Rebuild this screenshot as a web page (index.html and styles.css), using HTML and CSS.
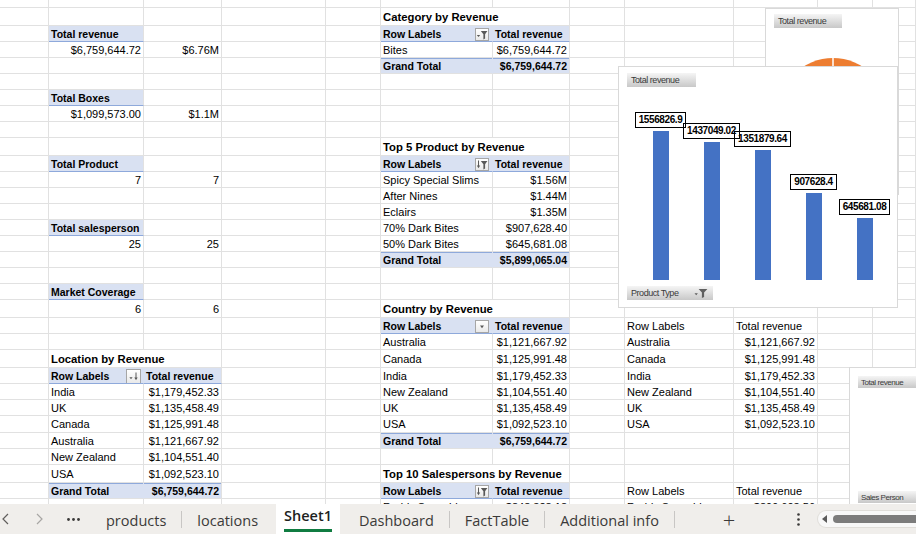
FILE: index.html
```html
<!DOCTYPE html>
<html lang="en">
<head>
<meta charset="utf-8">
<title>Sheet1</title>
<link rel="stylesheet" href="styles.css">
</head>
<body>
<main class="wrap">
  <div class="sheet">
    <!-- r0 -->
    <div class="c"></div><div class="c"></div><div class="c"></div><div class="c"></div><div class="c"></div><div class="c"></div><div class="c"></div><div class="c"></div><div class="c"></div><div class="c"></div><div class="c"></div><div class="c"></div>
    <!-- r1 -->
    <div class="c"></div><div class="c"></div><div class="c"></div><div class="c"></div><div class="c"></div>
    <div class="c b w2">Category by Revenue</div>
    <div class="c"></div><div class="c"></div><div class="c"></div><div class="c"></div><div class="c"></div>
    <!-- r2 -->
    <div class="c"></div><div class="c h">Total revenue</div><div class="c"></div><div class="c"></div><div class="c"></div>
    <div class="c h hl">Row Labels<span class="fb"><svg viewBox="0 0 12 11"><path d="M0.8 6h3.4L2.5 8z"/><path d="M4.8 2h6.6L9.1 5.2v4.3L7.4 10.4V5.2z"/></svg></span></div>
    <div class="c h">Total revenue</div>
    <div class="c"></div><div class="c"></div><div class="c"></div><div class="c"></div><div class="c"></div>
    <!-- r3 -->
    <div class="c"></div><div class="c r">$6,759,644.72</div><div class="c r">$6.76M</div><div class="c"></div><div class="c"></div>
    <div class="c">Bites</div><div class="c r">$6,759,644.72</div>
    <div class="c"></div><div class="c"></div><div class="c"></div><div class="c"></div><div class="c"></div>
    <!-- r4 -->
    <div class="c"></div><div class="c"></div><div class="c"></div><div class="c"></div><div class="c"></div>
    <div class="c g gl">Grand Total</div><div class="c g r">$6,759,644.72</div>
    <div class="c"></div><div class="c"></div><div class="c"></div><div class="c"></div><div class="c"></div>
    <!-- r5 -->
    <div class="c"></div><div class="c"></div><div class="c"></div><div class="c"></div><div class="c"></div><div class="c"></div><div class="c"></div><div class="c"></div><div class="c"></div><div class="c"></div><div class="c"></div><div class="c"></div>
    <!-- r6 -->
    <div class="c"></div><div class="c h">Total Boxes</div>
    <div class="c"></div><div class="c"></div><div class="c"></div><div class="c"></div><div class="c"></div><div class="c"></div><div class="c"></div><div class="c"></div><div class="c"></div><div class="c"></div>
    <!-- r7 -->
    <div class="c"></div><div class="c r">$1,099,573.00</div><div class="c r">$1.1M</div>
    <div class="c"></div><div class="c"></div><div class="c"></div><div class="c"></div><div class="c"></div><div class="c"></div><div class="c"></div><div class="c"></div><div class="c"></div>
    <!-- r8 -->
    <div class="c"></div><div class="c"></div><div class="c"></div><div class="c"></div><div class="c"></div><div class="c"></div><div class="c"></div><div class="c"></div><div class="c"></div><div class="c"></div><div class="c"></div><div class="c"></div>
    <!-- r9 -->
    <div class="c"></div><div class="c"></div><div class="c"></div><div class="c"></div><div class="c"></div>
    <div class="c b w2">Top 5 Product by Revenue</div>
    <div class="c"></div><div class="c"></div><div class="c"></div><div class="c"></div><div class="c"></div>
    <!-- r10 -->
    <div class="c"></div><div class="c h">Total Product</div><div class="c"></div><div class="c"></div><div class="c"></div>
    <div class="c h hl">Row Labels<span class="fb"><svg viewBox="0 0 12 11"><path class="st" d="M2.5 1.5v6.5"/><path d="M0.8 6.6L2.5 9.2l1.7-2.6z"/><path d="M4.8 2h6.6L9.1 5.2v4.3L7.4 10.4V5.2z"/></svg></span></div>
    <div class="c h">Total revenue</div>
    <div class="c"></div><div class="c"></div><div class="c"></div><div class="c"></div><div class="c"></div>
    <!-- r11 -->
    <div class="c"></div><div class="c r">7</div><div class="c r">7</div><div class="c"></div><div class="c"></div>
    <div class="c">Spicy Special Slims</div><div class="c r">$1.56M</div>
    <div class="c"></div><div class="c"></div><div class="c"></div><div class="c"></div><div class="c"></div>
    <!-- r12 -->
    <div class="c"></div><div class="c"></div><div class="c"></div><div class="c"></div><div class="c"></div>
    <div class="c">After Nines</div><div class="c r">$1.44M</div>
    <div class="c"></div><div class="c"></div><div class="c"></div><div class="c"></div><div class="c"></div>
    <!-- r13 -->
    <div class="c"></div><div class="c"></div><div class="c"></div><div class="c"></div><div class="c"></div>
    <div class="c">Eclairs</div><div class="c r">$1.35M</div>
    <div class="c"></div><div class="c"></div><div class="c"></div><div class="c"></div><div class="c"></div>
    <!-- r14 -->
    <div class="c"></div><div class="c h">Total salesperson</div><div class="c"></div><div class="c"></div><div class="c"></div>
    <div class="c">70% Dark Bites</div><div class="c r">$907,628.40</div>
    <div class="c"></div><div class="c"></div><div class="c"></div><div class="c"></div><div class="c"></div>
    <!-- r15 -->
    <div class="c"></div><div class="c r">25</div><div class="c r">25</div><div class="c"></div><div class="c"></div>
    <div class="c">50% Dark Bites</div><div class="c r">$645,681.08</div>
    <div class="c"></div><div class="c"></div><div class="c"></div><div class="c"></div><div class="c"></div>
    <!-- r16 -->
    <div class="c"></div><div class="c"></div><div class="c"></div><div class="c"></div><div class="c"></div>
    <div class="c g gl">Grand Total</div><div class="c g r">$5,899,065.04</div>
    <div class="c"></div><div class="c"></div><div class="c"></div><div class="c"></div><div class="c"></div>
    <!-- r17 -->
    <div class="c"></div><div class="c"></div><div class="c"></div><div class="c"></div><div class="c"></div><div class="c"></div><div class="c"></div><div class="c"></div><div class="c"></div><div class="c"></div><div class="c"></div><div class="c"></div>
    <!-- r18 -->
    <div class="c"></div><div class="c h">Market Coverage</div>
    <div class="c"></div><div class="c"></div><div class="c"></div><div class="c"></div><div class="c"></div><div class="c"></div><div class="c"></div><div class="c"></div><div class="c"></div><div class="c"></div>
    <!-- r19 -->
    <div class="c"></div><div class="c r">6</div><div class="c r">6</div><div class="c"></div><div class="c"></div>
    <div class="c b w2">Country by Revenue</div>
    <div class="c"></div><div class="c"></div><div class="c"></div><div class="c"></div><div class="c"></div>
    <!-- r20 -->
    <div class="c"></div><div class="c"></div><div class="c"></div><div class="c"></div><div class="c"></div>
    <div class="c h hl">Row Labels<span class="fb"><svg viewBox="0 0 12 11"><path d="M4 4.6h4L6 7.2z"/></svg></span></div>
    <div class="c h">Total revenue</div>
    <div class="c"></div><div class="c">Row Labels</div><div class="c">Total revenue</div><div class="c"></div><div class="c"></div>
    <!-- r21 -->
    <div class="c"></div><div class="c"></div><div class="c"></div><div class="c"></div><div class="c"></div>
    <div class="c">Australia</div><div class="c r">$1,121,667.92</div>
    <div class="c"></div><div class="c">Australia</div><div class="c r">$1,121,667.92</div><div class="c"></div><div class="c"></div>
    <!-- r22 -->
    <div class="c"></div><div class="c b w2">Location by Revenue</div><div class="c"></div><div class="c"></div>
    <div class="c">Canada</div><div class="c r">$1,125,991.48</div>
    <div class="c"></div><div class="c">Canada</div><div class="c r">$1,125,991.48</div><div class="c"></div><div class="c"></div>
    <!-- r23 -->
    <div class="c"></div>
    <div class="c h hl">Row Labels<span class="fb fb-lg"><svg viewBox="0 0 12 11"><path d="M1.4 6.2h3.2L3 8.2z"/><path class="st" d="M8 1.5v6.5"/><path d="M6.3 6.6L8 9.2l1.7-2.6z"/></svg></span></div>
    <div class="c h">Total revenue</div><div class="c"></div><div class="c"></div>
    <div class="c">India</div><div class="c r">$1,179,452.33</div>
    <div class="c"></div><div class="c">India</div><div class="c r">$1,179,452.33</div><div class="c"></div><div class="c"></div>
    <!-- r24 -->
    <div class="c"></div><div class="c">India</div><div class="c r">$1,179,452.33</div><div class="c"></div><div class="c"></div>
    <div class="c">New Zealand</div><div class="c r">$1,104,551.40</div>
    <div class="c"></div><div class="c">New Zealand</div><div class="c r">$1,104,551.40</div><div class="c"></div><div class="c"></div>
    <!-- r25 -->
    <div class="c"></div><div class="c">UK</div><div class="c r">$1,135,458.49</div><div class="c"></div><div class="c"></div>
    <div class="c">UK</div><div class="c r">$1,135,458.49</div>
    <div class="c"></div><div class="c">UK</div><div class="c r">$1,135,458.49</div><div class="c"></div><div class="c"></div>
    <!-- r26 -->
    <div class="c"></div><div class="c">Canada</div><div class="c r">$1,125,991.48</div><div class="c"></div><div class="c"></div>
    <div class="c">USA</div><div class="c r">$1,092,523.10</div>
    <div class="c"></div><div class="c">USA</div><div class="c r">$1,092,523.10</div><div class="c"></div><div class="c"></div>
    <!-- r27 -->
    <div class="c"></div><div class="c">Australia</div><div class="c r">$1,121,667.92</div><div class="c"></div><div class="c"></div>
    <div class="c g gl">Grand Total</div><div class="c g r">$6,759,644.72</div>
    <div class="c"></div><div class="c"></div><div class="c"></div><div class="c"></div><div class="c"></div>
    <!-- r28 -->
    <div class="c"></div><div class="c">New Zealand</div><div class="c r">$1,104,551.40</div>
    <div class="c"></div><div class="c"></div><div class="c"></div><div class="c"></div><div class="c"></div><div class="c"></div><div class="c"></div><div class="c"></div><div class="c"></div>
    <!-- r29 -->
    <div class="c"></div><div class="c">USA</div><div class="c r">$1,092,523.10</div><div class="c"></div><div class="c"></div>
    <div class="c b w2">Top 10 Salespersons by Revenue</div>
    <div class="c"></div><div class="c"></div><div class="c"></div><div class="c"></div><div class="c"></div>
    <!-- r30 -->
    <div class="c"></div><div class="c g gl">Grand Total</div><div class="c g r">$6,759,644.72</div><div class="c"></div><div class="c"></div>
    <div class="c h hl">Row Labels<span class="fb"><svg viewBox="0 0 12 11"><path class="st" d="M2.5 1.5v6.5"/><path d="M0.8 6.6L2.5 9.2l1.7-2.6z"/><path d="M4.8 2h6.6L9.1 5.2v4.3L7.4 10.4V5.2z"/></svg></span></div>
    <div class="c h">Total revenue</div>
    <div class="c"></div><div class="c">Row Labels</div><div class="c">Total revenue</div><div class="c"></div><div class="c"></div>
    <!-- r31 -->
    <div class="c"></div><div class="c"></div><div class="c"></div><div class="c"></div><div class="c"></div>
    <div class="c">Roddy Speechley</div><div class="c r">$848,328.18</div>
    <div class="c"></div><div class="c">Roddy Speechley</div><div class="c r">$899,603.56</div><div class="c"></div><div class="c"></div>
  </div>

  <section class="chart pie">
    <div class="fbtn">Total revenue</div>
    <svg class="pie-svg" width="132" height="150" viewBox="0 0 132 150"><circle cx="67" cy="85" r="55" fill="#ed7d31"/><path d="M67 85V29" stroke="#fff" stroke-width="1.5"/></svg>
  </section>

  <section class="chart bars">
    <div class="fbtn">Total revenue</div>
    <div class="plot">
      <div class="slot"><span class="dl">1556826.9</span><i class="bar" style="height:149px"></i></div>
      <div class="slot"><span class="dl">1437049.02</span><i class="bar" style="height:138px"></i></div>
      <div class="slot"><span class="dl">1351879.64</span><i class="bar" style="height:130px"></i></div>
      <div class="slot"><span class="dl">907628.4</span><i class="bar" style="height:87px"></i></div>
      <div class="slot"><span class="dl">645681.08</span><i class="bar" style="height:62px"></i></div>
    </div>
    <div class="fbtn axis">Product Type<svg class="fic" viewBox="0 0 14 10"><path d="M0.5 5.2h3.4L2.2 7.2z"/><path d="M4.6 1h8.8L10.1 4.6V9L7.9 10V4.6z"/></svg></div>
  </section>

  <section class="chart third">
    <div class="fbtn">Total revenue</div>
    <div class="fbtn">Sales Person</div>
  </section>
</main>

<nav class="tabbar">
  <div class="tnav">
    <svg class="chev" viewBox="0 0 7 12"><path d="M6 1L1 6l5 5"/></svg>
    <svg class="chev dim" viewBox="0 0 7 12"><path d="M1 1l5 5-5 5"/></svg>
    <svg class="dots" viewBox="0 0 13 3"><circle cx="1.5" cy="1.5" r="1.4"/><circle cx="6.5" cy="1.5" r="1.4"/><circle cx="11.5" cy="1.5" r="1.4"/></svg>
  </div>
  <div class="tab">products</div><i class="sep"></i>
  <div class="tab">locations</div>
  <div class="tab active"><span>Sheet1</span></div>
  <div class="tab">Dashboard</div><i class="sep"></i>
  <div class="tab">FactTable</div><i class="sep"></i>
  <div class="tab">Additional info</div><i class="sep"></i>
  <div class="add">+</div>
  <svg class="kebab" viewBox="0 0 3 13"><circle cx="1.5" cy="1.5" r="1.3"/><circle cx="1.5" cy="6.5" r="1.3"/><circle cx="1.5" cy="11.5" r="1.3"/></svg>
  <div class="hscroll">
    <svg class="larr" viewBox="0 0 5 8"><path d="M5 0v8L0 4z"/></svg>
    <span class="thumb"></span>
  </div>
</nav>
</body>
</html>
```

FILE: styles.css
```css
* { box-sizing: border-box; }
html, body { margin: 0; padding: 0; }
body {
  width: 916px;
  height: 534px;
  overflow: hidden;
  display: flex;
  flex-direction: column;
  background: #fff;
  color: #000;
  font-family: "Liberation Sans", Arial, sans-serif;
}

/* ---------- worksheet ---------- */
.wrap {
  position: relative;
  flex: none;
  height: 504px;
  overflow: hidden;
}
.sheet {
  display: grid;
  grid-template-columns: 49px 95px 78px 104px 55px 112px 77px 55px 109px 84px 55px 1fr;
  grid-template-rows: 8px 18px repeat(7, 16px) 18px repeat(9, 16px) 18px 16px 16px 18px 16px 16px 16px 17px 16px 16px 18px 16px 16px;
}
.c {
  display: flex;
  align-items: center;
  min-width: 0;
  padding: 1px 2px 0;
  border-right: 1px solid #e1e1e1;
  border-bottom: 1px solid #e1e1e1;
  font-size: 11px;
  line-height: 13px;
  white-space: nowrap;
  overflow: hidden;
}
.r { justify-content: flex-end; }
.b { font-weight: bold; font-size: 11.3px; }
.w2 { grid-column: span 2; }
.h {
  background: #d9e1f2;
  font-weight: bold;
  font-size: 10.5px;
  border-bottom-color: #8ea9db;
}
.hl {
  justify-content: space-between;
  border-right-color: #d9e1f2;
}
.g {
  background: #d9e1f2;
  font-weight: bold;
  font-size: 10.5px;
  box-shadow: inset 0 1px #8ea9db;
}
.gl { border-right-color: #d9e1f2; }

.fb {
  flex: none;
  width: 14px;
  height: 13px;
  margin-right: 1px;
  border: 1px solid #a6a6a6;
  background: linear-gradient(#ffffff, #e9e9e9);
  display: flex;
  align-items: center;
  justify-content: center;
}
.fb-lg { width: 15px; height: 15px; margin-right: 0; }
.fb svg { width: 12px; height: 11px; fill: #595959; }
.fb .st { fill: none; stroke: #595959; stroke-width: 1; }

/* ---------- charts ---------- */
.chart {
  position: absolute;
  display: flex;
  flex-direction: column;
  align-items: flex-start;
  background: #fff;
  border: 1px solid #d9d9d9;
}
.pie { left: 765px; top: 8px; width: 134px; height: 187px; padding: 5px 8px; }
.bars { left: 618px; top: 66px; width: 280px; height: 242px; padding: 6px 8px 7px; }
.third { left: 849px; top: 367px; width: 80px; height: 146px; padding: 8px 8px 9px; justify-content: space-between; }

.fbtn {
  flex: none;
  height: 14px;
  padding: 0 4px;
  display: flex;
  align-items: center;
  background: linear-gradient(#f5f5f5, #c8c8c8);
  color: #3a3a3a;
  font-family: "Liberation Sans", Arial, sans-serif;
  font-size: 9px;
  letter-spacing: -0.45px;
  white-space: nowrap;
}
.pie .fbtn { width: 68px; }
.bars .fbtn { width: 69px; }
.bars .axis { width: 86px; margin-top: 6px; justify-content: space-between; padding-right: 5px; }
.third .fbtn { width: 60px; height: 12px; font-size: 8px; padding: 0 3px; }
.fic { width: 14px; height: 10px; fill: #606060; }
.pie-svg { display: block; margin-left: -8px; }

.plot {
  display: flex;
  height: 193px;
  margin-left: 8px;
}
.slot {
  width: 51px;
  display: flex;
  flex-direction: column;
  justify-content: flex-end;
  align-items: center;
}
.dl {
  border: 1px solid #000;
  padding: 0 3px;
  margin-bottom: 3px;
  font-size: 10px;
  line-height: 14px;
  font-weight: bold;
  letter-spacing: -0.4px;
  white-space: nowrap;
}
.bar { display: block; width: 16px; background: #4472c4; }

/* ---------- sheet tabs ---------- */
.tabbar {
  flex: none;
  height: 30px;
  display: flex;
  align-items: center;
  background: #f0eeeb;
  color: #3b3a39;
  font-family: "Open Sans", "Noto Sans", sans-serif;
  font-size: 14.5px;
}
.tnav {
  width: 91px;
  flex: none;
  display: flex;
  align-items: center;
}
.chev { width: 7px; height: 12px; fill: none; stroke: #605e5c; stroke-width: 1.2; margin-left: 2px; }
.chev.dim { stroke: #a8a6a4; margin-left: 27px; }
.dots { width: 13px; height: 3px; fill: #3b3a39; margin-left: 24px; }
.tab {
  align-self: stretch;
  display: flex;
  align-items: center;
  padding: 2px 15px 0;
  white-space: nowrap;
}
.sep { width: 1px; height: 17px; background: #c8c6c4; }
.tab.active {
  background: #fff;
  margin: 0 4px 0 3px;
  padding: 0 8px 2px;
  align-items: flex-end;
  color: #201f1e;
  font-weight: 600;
}
.tab.active span {
  line-height: 20px;
  padding-bottom: 3px;
  border-bottom: 3px solid #107c41;
}
.add { margin-left: 48px; font-size: 22px; line-height: 1; font-weight: 300; color: #3b3a39; }
.kebab { width: 3px; height: 13px; fill: #3b3a39; margin-left: 62px; }
.hscroll {
  flex: 1;
  margin-left: 17px;
  height: 18px;
  display: flex;
  align-items: center;
  padding-left: 4px;
  background: #f8f8f8;
  border: 1px solid #e0deda;
  border-right: none;
  border-radius: 9px 0 0 9px;
}
.larr { width: 5px; height: 8px; fill: #5a5a5a; }
.thumb { flex: 1; height: 8px; margin-left: 6px; background: #7c7c7c; border-radius: 4px 0 0 4px; }
```
